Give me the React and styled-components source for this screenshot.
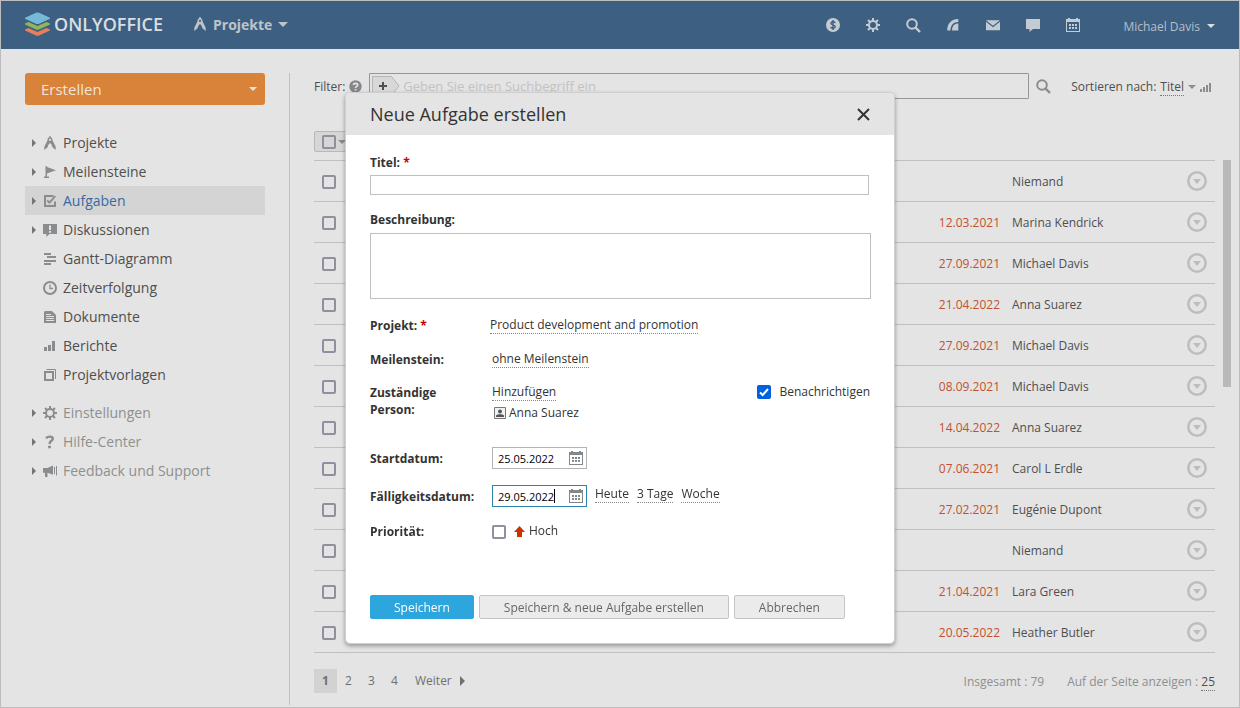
import React, { useState } from "react";
import styled, { createGlobalStyle } from "styled-components";

const GlobalStyle = createGlobalStyle`
  * {
    box-sizing: border-box;
  }
  body {
    margin: 0;
    background-color: #e4e4e4;
    color: #4f4f4f;
    font-family: "Open Sans", sans-serif;
    font-size: 12px;
    line-height: 16px;
  }
  button, input, textarea {
    margin: 0;
    font-family: inherit;
  }
  button {
    padding: 0;
    border: none;
    background: none;
    color: inherit;
    cursor: pointer;
  }
  a {
    color: inherit;
    text-decoration: none;
  }
  svg {
    display: block;
    flex: none;
  }
`;

const Page = styled.div`
  display: flex;
  flex-direction: column;
  min-height: 100vh;
  border: 1px solid #bdbdbd;
`;

/* ---------- header ---------- */

const Header = styled.header`
  display: flex;
  align-items: center;
  height: 48px;
  padding: 0 24px;
  background-color: #3d5f82;
  color: #c4cbd3;
`;

const Logo = styled.a`
  display: flex;
  align-items: center;
  gap: 4px;
  padding-bottom: 2px;
  color: #dadee3;
  font-size: 18px;
  font-weight: 600;
  line-height: 24px;
`;

const ModuleButton = styled.button`
  display: flex;
  align-items: center;
  gap: 6px;
  margin-left: 30px;
  padding-bottom: 2px;
  color: #bfc4c9;
  font-size: 14px;
  font-weight: 700;
`;

const HeaderTools = styled.nav`
  display: flex;
  align-items: center;
  gap: 26px;
  margin-left: auto;
`;

const ToolLink = styled.a`
  width: 14px;
`;

const ProfileButton = styled.button`
  display: flex;
  align-items: center;
  gap: 7px;
  margin-left: 43px;
  padding-top: 2px;
  color: #b4bfca;
  font-size: 12px;
`;

/* ---------- sidebar ---------- */

const Body = styled.div`
  display: flex;
  flex: 1;
  padding-top: 24px;
`;

const Sidebar = styled.aside`
  width: 289px;
  margin-bottom: 2px;
  padding: 0 24px;
  border-right: 1px solid #c0c0c0;
`;

const CreateButton = styled.button`
  display: flex;
  align-items: center;
  justify-content: space-between;
  width: 100%;
  height: 32px;
  margin-bottom: 23px;
  padding: 0 8px 0 16px;
  border-radius: 3px;
  background-color: #d98239;
  color: #f0e4d9;
  font-size: 15px;
`;

const MenuList = styled.ul`
  margin: 0 0 9px;
  padding: 0;
  list-style: none;
`;

const MenuLink = styled.a`
  display: flex;
  align-items: center;
  height: 29px;
  padding-left: 7px;
  background-color: ${(props) => (props.$active ? "#d4d4d4" : "transparent")};
  color: ${(props) =>
    props.$active ? "#366ba3" : props.$muted ? "#8f8f8f" : "#4f4f4f"};
  font-size: 14px;
`;

const MenuArrow = styled.span`
  width: 11px;
`;

const MenuIcon = styled.span`
  width: 20px;
  color: #8a8d90;
`;

/* ---------- main ---------- */

const Main = styled.main`
  flex: 1;
  min-width: 0;
  padding: 0 8px 14px 24px;
`;

const FilterBar = styled.div`
  display: flex;
  align-items: center;
  padding-right: 20px;
`;

const FilterLabel = styled.label`
  margin-right: 4px;
  padding-top: 2px;
`;

const FilterBox = styled.div`
  display: flex;
  flex: 1;
  align-items: center;
  height: 26px;
  margin: 0 7px;
  padding-left: 2px;
  border: 1px solid #969696;
  border-radius: 1px;
`;

const FilterInput = styled.input`
  flex: 1;
  padding: 0 3px;
  border: none;
  outline: none;
  background: none;
  font-size: 13px;
  &::placeholder {
    color: #c2c2c2;
    opacity: 1;
  }
`;

const SearchButton = styled.button`
  color: #8a8d90;
`;

const Sorter = styled.div`
  display: flex;
  align-items: center;
  gap: 4px;
  margin-left: 20px;
  padding-top: 2px;
`;

const DottedButton = styled.button`
  border-bottom: 1px dotted ${(props) => (props.$dim ? "#777" : "#888")};
  color: ${(props) => (props.$dim ? "#4f4f4f" : "#333")};
  font-size: 12px;
  line-height: 16px;
  white-space: nowrap;
`;

const Checkbox = styled.input.attrs({ type: "checkbox" })`
  display: grid;
  flex: none;
  place-items: center;
  width: 14px;
  height: 14px;
  appearance: none;
  border: 2px solid #8f8f9d;
  border-radius: 2px;
  &:checked {
    border-color: #0060df;
    background: #0060df
      url("data:image/svg+xml,%3Csvg xmlns='http://www.w3.org/2000/svg' viewBox='0 0 10 10'%3E%3Cpath d='M1 5.5 3.7 8 9 2' fill='none' stroke='white' stroke-width='2'/%3E%3C/svg%3E")
      center / 10px 10px no-repeat;
  }
`;

const GroupActions = styled.div`
  display: flex;
  align-items: center;
  gap: 2px;
  width: 120px;
  height: 21px;
  margin: 32px 0 8px;
  padding-left: 7px;
  border: 1px solid #b8b8b8;
  border-radius: 2px;
  background-color: #d6d6d6;
`;

const ListArea = styled.div`
  display: flex;
  gap: 8px;
`;

const TaskTable = styled.table`
  flex: 1;
  width: 100%;
  border-collapse: collapse;
  border-bottom: 1px solid #c0c0c0;
  table-layout: fixed;
`;

const TaskRow = styled.tr`
  height: 41px;
  border-top: 1px solid #c0c0c0;
`;

const Cell = styled.td`
  width: ${(props) => props.$width};
  padding: ${(props) => props.$padding || "0"};
  color: ${(props) => (props.$overdue ? "#c2512f" : "#4f4f4f")};
  text-align: ${(props) => (props.$overdue ? "right" : "left")};
  vertical-align: middle;
`;

const RowMenu = styled.button`
  display: block;
  color: #bdbdbd;
`;

const ScrollThumb = styled.div`
  width: 8px;
  height: 227px;
  background-color: #b8b8b8;
`;

const Footer = styled.footer`
  display: flex;
  align-items: center;
  height: 24px;
  margin: 16px 16px 0 0;
  color: #707070;
`;

const PageLink = styled.a`
  width: 23px;
  line-height: 24px;
  background-color: ${(props) => (props.$current ? "#d2d2d2" : "transparent")};
  font-weight: ${(props) => (props.$current ? 700 : 400)};
  text-align: center;
`;

const NextLink = styled.a`
  display: flex;
  align-items: center;
  gap: 8px;
  margin-left: 9px;
`;

const Totals = styled.div`
  display: flex;
  align-items: center;
  gap: 23px;
  margin-left: auto;
  padding-top: 2px;
  color: #8f8f8f;
`;

/* ---------- dialog ---------- */

const Overlay = styled.div`
  position: absolute;
  top: 0;
  left: 0;
  display: flex;
  justify-content: center;
  width: 100%;
  padding-top: 92px;
`;

const Dialog = styled.form`
  width: 550px;
  overflow: hidden;
  border: 1px solid #cfcfcf;
  border-radius: 5px;
  background-color: #fff;
  box-shadow: 0 2px 4px rgba(0, 0, 0, 0.35);
  color: #333;
`;

const DialogHeader = styled.div`
  display: flex;
  align-items: center;
  justify-content: space-between;
  height: 42px;
  padding: 0 24px;
  background-color: #e4e4e4;
`;

const DialogTitle = styled.h2`
  margin: 0;
  font-size: 18px;
  font-weight: 400;
  line-height: 24px;
`;

const DialogBody = styled.div`
  padding: 19px 23px 24px 24px;
`;

const Label = styled.label`
  display: block;
  width: ${(props) => props.$width || "auto"};
  flex: none;
  font-weight: 700;
  line-height: 17px;
`;

const Required = styled.span`
  color: #c00;
`;

const TitleInput = styled.input`
  display: block;
  width: 499px;
  max-width: 100%;
  height: 20px;
  margin: 4px 0 16px;
  border: 1px solid #c0c0c0;
`;

const DescriptionInput = styled.textarea`
  display: block;
  width: 100%;
  height: 66px;
  margin: 5px 0 18px;
  border: 1px solid #c0c0c0;
  resize: none;
`;

const Field = styled.div`
  display: flex;
  align-items: ${(props) => props.$align || "flex-start"};
  margin-bottom: ${(props) => props.$gap || "16px"};
  padding-right: 1px;
`;

const People = styled.div`
  flex: 1;
`;

const Person = styled.div`
  display: flex;
  align-items: center;
  gap: 3px;
  margin-top: 4px;
  padding-left: 2px;
  line-height: 16px;
`;

const CheckLabel = styled.label`
  display: flex;
  align-items: center;
  gap: 8px;
  line-height: 16px;
`;

const Priority = styled.span`
  display: flex;
  align-items: center;
  gap: 4px;
  padding-bottom: 1px;
`;

const DateBox = styled.div`
  display: flex;
  align-items: center;
  width: 95px;
  height: 22px;
  padding: 0 3px 0 5px;
  border: 1px solid #b3b3b3;
  color: #83888d;
  &:focus-within {
    border-color: #2a82ad;
  }
`;

const DateInput = styled.input`
  width: 0;
  height: 16px;
  flex: 1;
  padding: 0;
  border: none;
  outline: none;
  color: #000;
  caret-color: transparent;
  font-size: 11px;
  &:focus {
    background: linear-gradient(#000, #000) 56px center / 1px 14px no-repeat;
  }
`;

const Shortcuts = styled.div`
  display: flex;
  gap: 8px;
  margin-left: 8px;
  padding-bottom: 3px;
`;

const Buttons = styled.div`
  display: flex;
  gap: 5px;
  margin-top: 55px;
`;

const Button = styled.button`
  height: 24px;
  padding: 0 ${(props) => (props.$primary ? "23px" : "24px")};
  border: 1px solid ${(props) => (props.$primary ? "#2da6dd" : "#c4c4c4")};
  border-radius: 2px;
  background-color: ${(props) => (props.$primary ? "#2da6dd" : "#ebebeb")};
  color: ${(props) => (props.$primary ? "#fff" : "#666")};
  font-size: 12px;
`;

/* ---------- icons ---------- */

const Svg = ({ w = 14, h = 14, children, ...rest }) => (
  <svg width={w} height={h} viewBox={`0 0 ${w} ${h}`} fill="currentColor" aria-hidden="true" {...rest}>
    {children}
  </svg>
);

const Caret = ({ w = 8, h = 4, ...rest }) => (
  <Svg w={w} h={h} {...rest}>
    <path d={`M0 0H${w}L${w / 2} ${h}Z`} />
  </Svg>
);

const RightArrow = ({ w = 4, h = 8, ...rest }) => (
  <Svg w={w} h={h} {...rest}>
    <path d={`M0 0V${h}L${w} ${h / 2}Z`} />
  </Svg>
);

const LogoIcon = () => (
  <Svg w={25} h={24}>
    <path d="M0 17.5 3.5 16 12.5 20 21.5 16 25 17.5V18.5L13.5 23.7H11.5L0 18.5Z" fill="#e67f5d" />
    <path d="M0 11.5 3.5 10 12.5 14 21.5 10 25 11.5V12.5L13.5 17.7H11.5L0 12.5Z" fill="#92b657" />
    <path d="M0 5.8 11.5 .6H13.5L25 5.8V6.8L13.5 12H11.5L0 6.8Z" fill="#75b8d8" />
  </Svg>
);

const ProjectIcon = () => (
  <Svg>
    <path
      fillRule="evenodd"
      d="M6.3 0H7.7V1.2C9 1.6 9.7 2.8 9.4 4L12.6 10.4 12.8 14 9.6 11.4 8.4 8.4 7 7 5.6 8.4 4.4 11.4 1.2 14 1.4 10.4 4.6 4C4.3 2.8 5 1.6 6.3 1.2ZM7 2.7A1.1 1.1 0 1 0 7 4.9 1.1 1.1 0 1 0 7 2.7Z"
    />
  </Svg>
);

const FlagIcon = () => (
  <Svg>
    <path d="M2.5 1H4V2L13 5.3 4 8.6V11.6H6V13H1V11.6H2.5Z" />
  </Svg>
);

const TaskIcon = () => (
  <Svg>
    <path d="M10.5 2H2V12H12V7.5" fill="none" stroke="currentColor" strokeWidth="2" />
    <path d="M4.2 6.3 6.5 8.7 12.3 2.2" fill="none" stroke="currentColor" strokeWidth="1.8" />
  </Svg>
);

const DiscussIcon = () => (
  <Svg>
    <path fillRule="evenodd" d="M0 1H14V11H6.5L3.3 14V11H0ZM6 2.5V7H8V2.5ZM6 8V9.7H8V8Z" />
  </Svg>
);

const GanttIcon = () => (
  <Svg>
    <path d="M1 1H8V3H1ZM4 4H13V6H4ZM1 8H13V10H1ZM1 11H8V13H1Z" />
  </Svg>
);

const ClockIcon = () => (
  <Svg>
    <circle cx="7" cy="7" r="6" fill="none" stroke="currentColor" strokeWidth="2" />
    <path d="M7 3.5V7.5H10" fill="none" stroke="currentColor" strokeWidth="1.3" />
  </Svg>
);

const DocIcon = () => (
  <Svg>
    <path
      fillRule="evenodd"
      d="M1 2 2 1H9L13 5V13H1ZM3 4V5H8V4ZM3 6V7H11V6ZM3 8V9H11V8ZM3 10V11H11V10Z"
    />
  </Svg>
);

const ReportIcon = () => (
  <Svg>
    <path d="M1 8H4V12H1ZM5 6H8V12H5ZM9 2H12V12H9Z" />
  </Svg>
);

const TemplateIcon = () => (
  <Svg fill="none" stroke="currentColor">
    <path d="M2 4H10V12H2Z" strokeWidth="2" />
    <path d="M3.5 1.5H12.5V11" />
  </Svg>
);

const GearIcon = () => (
  <Svg fill="none" stroke="currentColor">
    <circle cx="7" cy="7" r="4" strokeWidth="2" />
    <path
      d="M7 0V3M7 11V14M0 7H3M11 7H14M2 2 4.2 4.2M9.8 9.8 12 12M12 2 9.8 4.2M4.2 9.8 2 12"
      strokeWidth="2"
    />
  </Svg>
);

const QuestionIcon = () => (
  <Svg fill="none" stroke="currentColor">
    <path d="M3.3 3.5C4 1.2 9.8 .8 9.8 3.7 9.8 6 6.6 5.6 6.6 8.9" strokeWidth="2.4" />
    <path d="M6.5 10.7V13.3" strokeWidth="2.7" />
  </Svg>
);

const MegaphoneIcon = () => (
  <Svg>
    <path d="M0 4H4.5L10 1.5V10.8L4.5 8.8V13H2V8.8H0Z" />
    <path d="M11.5 3V10M13.5 2V11.5" stroke="currentColor" fill="none" />
  </Svg>
);

const DollarIcon = () => (
  <Svg>
    <circle cx="7" cy="7" r="7" />
    <path
      d="M9.3 4.9C8.5 3.3 4.9 3.4 4.9 5.3 4.9 7.3 9.2 6.6 9.2 8.8 9.2 10.6 5.4 10.7 4.6 9M7 2V12"
      fill="none"
      stroke="#3d5f82"
      strokeWidth="1.4"
    />
  </Svg>
);

const SearchIcon = () => (
  <Svg w={15} h={15} fill="none" stroke="currentColor">
    <circle cx="6" cy="6" r="4.8" strokeWidth="2" />
    <path d="M9.3 9.3 14 14" strokeWidth="2.4" />
  </Svg>
);

const FeedIcon = () => (
  <Svg>
    <path d="M1.3 12.5C1 5.5 5.5 1 12.3 1V3.9C7.5 3.9 4.6 7 4.4 12.5Z" />
    <path d="M6 12.5C6 8 8.5 5.5 12.3 5.5V12.5Z" />
  </Svg>
);

const MailIcon = () => (
  <Svg>
    <path d="M0 2.2H14L7 7.8ZM0 3.8 7 9.3 14 3.8V12.2H0Z" />
  </Svg>
);

const ChatIcon = () => (
  <Svg>
    <path d="M0 1H14V11H7L3.5 14V11H0Z" />
  </Svg>
);

const CalendarIcon = () => (
  <Svg shapeRendering="crispEdges">
    <path
      fillRule="evenodd"
      d="M0 1H2V0H4V1H10V0H12V1H14V14H0ZM1 4V13H13V4ZM3 6H5V8H3ZM6 6H8V8H6ZM9 6H11V8H9ZM3 9H5V11H3ZM6 9H8V11H6ZM9 9H11V11H9Z"
    />
  </Svg>
);

const HelpIcon = () => (
  <Svg w={13} h={13}>
    <circle cx="6.5" cy="6.5" r="6.2" fill="#85878a" />
    <path d="M4.4 5C4.6 2.8 8.7 2.8 8.7 5 8.7 6.5 6.6 6.3 6.6 8M6.6 9V10.6" fill="none" stroke="#e4e4e4" strokeWidth="1.6" />
  </Svg>
);

const PlusTag = () => (
  <Svg w={28} h={20}>
    <path d="M.5 .5H19.5L27 10 19.5 19.5H.5Z" fill="#d8d8d8" stroke="#b5b5b5" />
    <path d="M11 6V14M7 10H15" stroke="#4f4f4f" strokeWidth="2" />
  </Svg>
);

const SortIcon = () => (
  <Svg w={11} h={10} color="#8a8d90">
    <path d="M0 7H2V10H0ZM3 5H5V10H3ZM6 3H8V10H6ZM9 1H11V10H9Z" />
  </Svg>
);

const RowMenuIcon = () => (
  <Svg w={20} h={20}>
    <circle cx="10" cy="10" r="8.7" fill="none" stroke="currentColor" strokeWidth="2.5" />
    <path d="M6 8H14L10 13Z" />
  </Svg>
);

const CloseIcon = () => (
  <Svg w={13} h={13}>
    <path d="M1 1 12 12M12 1 1 12" stroke="#333" strokeWidth="2" />
  </Svg>
);

const PersonIcon = () => (
  <Svg w={12} h={12}>
    <path d="M.5 .5H11.5V11.5H.5Z" fill="#f1f1f1" stroke="#777" />
    <circle cx="6" cy="4.4" r="2" fill="#555" />
    <path d="M2 10V8.5C3.5 6.7 8.5 6.7 10 8.5V10Z" fill="#555" />
  </Svg>
);

const HighIcon = () => (
  <Svg w={11} h={11} fill="#cc3300">
    <path d="M5.5 0 11 6H8V11H3V6H0Z" />
  </Svg>
);

/* ---------- data ---------- */

const mainMenu = [
  { name: "Projekte", Icon: ProjectIcon, arrow: true },
  { name: "Meilensteine", Icon: FlagIcon, arrow: true },
  { name: "Aufgaben", Icon: TaskIcon, arrow: true, active: true },
  { name: "Diskussionen", Icon: DiscussIcon, arrow: true },
  { name: "Gantt-Diagramm", Icon: GanttIcon },
  { name: "Zeitverfolgung", Icon: ClockIcon },
  { name: "Dokumente", Icon: DocIcon },
  { name: "Berichte", Icon: ReportIcon },
  { name: "Projektvorlagen", Icon: TemplateIcon },
];

const extraMenu = [
  { name: "Einstellungen", Icon: GearIcon, arrow: true, muted: true },
  { name: "Hilfe-Center", Icon: QuestionIcon, arrow: true, muted: true },
  { name: "Feedback und Support", Icon: MegaphoneIcon, arrow: true, muted: true },
];

const headerTools = [
  { name: "Zahlungen", Icon: DollarIcon },
  { name: "Einstellungen", Icon: GearIcon },
  { name: "Suche", Icon: SearchIcon },
  { name: "Feed", Icon: FeedIcon },
  { name: "Mail", Icon: MailIcon },
  { name: "Chat", Icon: ChatIcon },
  { name: "Kalender", Icon: CalendarIcon },
];

const tasks = [
  { date: "", person: "Niemand" },
  { date: "12.03.2021", person: "Marina Kendrick" },
  { date: "27.09.2021", person: "Michael Davis" },
  { date: "21.04.2022", person: "Anna Suarez" },
  { date: "27.09.2021", person: "Michael Davis" },
  { date: "08.09.2021", person: "Michael Davis" },
  { date: "14.04.2022", person: "Anna Suarez" },
  { date: "07.06.2021", person: "Carol L Erdle" },
  { date: "27.02.2021", person: "Eugénie Dupont" },
  { date: "", person: "Niemand" },
  { date: "21.04.2021", person: "Lara Green" },
  { date: "20.05.2022", person: "Heather Butler" },
];

const Menu = ({ items }) => (
  <MenuList>
    {items.map(({ name, Icon, arrow, active, muted }) => (
      <li key={name}>
        <MenuLink href="#" $active={active} $muted={muted}>
          <MenuArrow>{arrow && <RightArrow color="#757575" />}</MenuArrow>
          <MenuIcon>
            <Icon />
          </MenuIcon>
          {name}
        </MenuLink>
      </li>
    ))}
  </MenuList>
);

const DateField = ({ id, value, onChange, autoFocus }) => (
  <DateBox>
    <DateInput
      id={id}
      value={value}
      maxLength={10}
      autoFocus={autoFocus}
      onChange={(e) => onChange(e.target.value)}
    />
    <CalendarIcon />
  </DateBox>
);

const TaskDialog = ({ onClose }) => {
  const [startDate, setStartDate] = useState("25.05.2022");
  const [dueDate, setDueDate] = useState("29.05.2022");

  return (
    <Overlay>
      <Dialog role="dialog" aria-labelledby="dialog-title" onSubmit={(e) => e.preventDefault()}>
        <DialogHeader>
          <DialogTitle id="dialog-title">Neue Aufgabe erstellen</DialogTitle>
          <button type="button" aria-label="Schließen" onClick={onClose}>
            <CloseIcon />
          </button>
        </DialogHeader>
        <DialogBody>
          <Label htmlFor="title">
            Titel: <Required>*</Required>
          </Label>
          <TitleInput id="title" />
          <Label htmlFor="description">Beschreibung:</Label>
          <DescriptionInput id="description" />
          <Field $gap="17px">
            <Label as="span" id="project" $width="120px">
              Projekt: <Required>*</Required>
            </Label>
            <DottedButton type="button" aria-describedby="project">
              Product development and promotion
            </DottedButton>
          </Field>
          <Field>
            <Label as="span" id="milestone" $width="122px">
              Meilenstein:
            </Label>
            <DottedButton type="button" aria-describedby="milestone">
              ohne Meilenstein
            </DottedButton>
          </Field>
          <Field $gap="26px">
            <Label as="span" id="responsible" $width="122px">
              Zuständige
              <br />
              Person:
            </Label>
            <People>
              <DottedButton type="button" aria-describedby="responsible">
                Hinzufügen
              </DottedButton>
              <Person>
                <PersonIcon />
                Anna Suarez
              </Person>
            </People>
            <CheckLabel>
              <Checkbox defaultChecked />
              Benachrichtigen
            </CheckLabel>
          </Field>
          <Field $align="center">
            <Label htmlFor="start" $width="122px">
              Startdatum:
            </Label>
            <DateField id="start" value={startDate} onChange={setStartDate} />
          </Field>
          <Field $align="center">
            <Label htmlFor="due" $width="122px">
              Fälligkeitsdatum:
            </Label>
            <DateField id="due" value={dueDate} onChange={setDueDate} autoFocus />
            <Shortcuts>
              <DottedButton type="button">Heute</DottedButton>
              <DottedButton type="button">3 Tage</DottedButton>
              <DottedButton type="button">Woche</DottedButton>
            </Shortcuts>
          </Field>
          <Field $gap="0">
            <Label as="span" id="priority" $width="122px">
              Priorität:
            </Label>
            <CheckLabel>
              <Checkbox aria-describedby="priority" />
              <Priority>
                <HighIcon />
                Hoch
              </Priority>
            </CheckLabel>
          </Field>
          <Buttons>
            <Button $primary>Speichern</Button>
            <Button>Speichern &amp; neue Aufgabe erstellen</Button>
            <Button type="button" onClick={onClose}>
              Abbrechen
            </Button>
          </Buttons>
        </DialogBody>
      </Dialog>
    </Overlay>
  );
};

const App = () => {
  const [dialogOpen, setDialogOpen] = useState(true);

  return (
    <>
      <GlobalStyle />
      <Page>
        <Header>
          <Logo href="#">
            <LogoIcon />
            ONLYOFFICE
          </Logo>
          <ModuleButton>
            <ProjectIcon />
            Projekte
            <Caret w={10} h={5} />
          </ModuleButton>
          <HeaderTools>
            {headerTools.map(({ name, Icon }) => (
              <ToolLink href="#" key={name} aria-label={name}>
                <Icon />
              </ToolLink>
            ))}
          </HeaderTools>
          <ProfileButton>
            Michael Davis
            <Caret color="#dadee3" />
          </ProfileButton>
        </Header>
        <Body>
          <Sidebar>
            <CreateButton onClick={() => setDialogOpen(true)}>
              Erstellen
              <Caret />
            </CreateButton>
            <Menu items={mainMenu} />
            <Menu items={extraMenu} />
          </Sidebar>
          <Main>
            <FilterBar>
              <FilterLabel htmlFor="filter">Filter:</FilterLabel>
              <HelpIcon />
              <FilterBox>
                <button aria-label="Filter hinzufügen">
                  <PlusTag />
                </button>
                <FilterInput id="filter" placeholder="Geben Sie einen Suchbegriff ein" />
              </FilterBox>
              <SearchButton aria-label="Suchen">
                <SearchIcon />
              </SearchButton>
              <Sorter>
                Sortieren nach:
                <DottedButton $dim>Titel</DottedButton>
                <Caret color="#8a8d90" />
                <SortIcon />
              </Sorter>
            </FilterBar>
            <GroupActions>
              <Checkbox aria-label="Alle auswählen" />
              <Caret color="#8a8a8a" />
            </GroupActions>
            <ListArea>
              <TaskTable>
                <tbody>
                  {tasks.map((task, i) => (
                    <TaskRow key={i}>
                      <Cell $width="30px" $padding="2px 0 0 8px">
                        <Checkbox aria-label={`Aufgabe ${i + 1}`} />
                      </Cell>
                      <Cell />
                      <Cell $width="90px" $padding="2px 0 0" $overdue>
                        {task.date}
                      </Cell>
                      <Cell $width="187px" $padding="2px 0 0 12px">
                        {task.person}
                      </Cell>
                      <Cell $width="28px">
                        <RowMenu aria-label="Aktionen">
                          <RowMenuIcon />
                        </RowMenu>
                      </Cell>
                    </TaskRow>
                  ))}
                </tbody>
              </TaskTable>
              <ScrollThumb />
            </ListArea>
            <Footer>
              <PageLink href="#" $current>
                1
              </PageLink>
              <PageLink href="#">2</PageLink>
              <PageLink href="#">3</PageLink>
              <PageLink href="#">4</PageLink>
              <NextLink href="#">
                Weiter
                <RightArrow w={5} h={10} />
              </NextLink>
              <Totals>
                <span>Insgesamt : 79</span>
                <span>
                  Auf der Seite anzeigen : <DottedButton $dim>25</DottedButton>
                </span>
              </Totals>
            </Footer>
          </Main>
        </Body>
      </Page>
      {dialogOpen && <TaskDialog onClose={() => setDialogOpen(false)} />}
    </>
  );
};

export default App;
